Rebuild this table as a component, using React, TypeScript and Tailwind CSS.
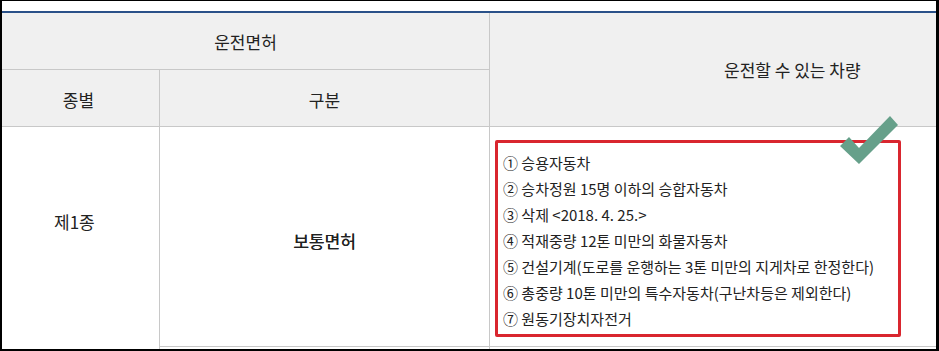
import React from "react";

const items = [
  "① 승용자동차",
  "② 승차정원 15명 이하의 승합자동차",
  "③ 삭제 <2018. 4. 25.>",
  "④ 적재중량 12톤 미만의 화물자동차",
  "⑤ 건설기계(도로를 운행하는 3톤 미만의 지게차로 한정한다)",
  "⑥ 총중량 10톤 미만의 특수자동차(구난차등은 제외한다)",
  "⑦ 원동기장치자전거",
];

export default function App() {
  return (
    <div
      className="relative w-[939px] h-[351px] overflow-hidden bg-white border-black border-t border-l-2 border-r-[3px] border-b-2 text-[#222]"
      style={{ fontFamily: '"Noto Sans CJK KR", "Noto Sans", sans-serif' }}
    >
      <div className="h-[10px] bg-white" />
      <div className="h-[2px] bg-[#2a5189]" />
      <div className="grid grid-cols-[158px_330px_1fr] grid-rows-[57px_57px_220px_2px] bg-white">
        <div className="col-start-1 col-end-3 row-start-1 bg-[#f0f0f0] border-b border-r border-[#c8c8c8] flex items-center justify-center pt-[1px] text-[17px] leading-[24px]">
          운전면허
        </div>
        <div className="col-start-3 row-start-1 row-end-3 bg-[#f0f0f0] border-b border-[#c8c8c8] flex items-center pl-[234px] pt-[1px] text-[17px] leading-[24px]">
          운전할 수 있는 차량
        </div>
        <div className="col-start-1 row-start-2 bg-[#f0f0f0] border-b border-r border-[#c8c8c8] flex items-center justify-center pt-[4px] pr-[4px] text-[17px] leading-[24px]">
          종별
        </div>
        <div className="col-start-2 row-start-2 bg-[#f0f0f0] border-b border-r border-[#c8c8c8] flex items-center justify-center pt-[4px] text-[17px] leading-[24px]">
          구분
        </div>
        <div className="col-start-1 row-start-3 row-end-5 border-r border-[#c8c8c8] pl-[52px] pt-[83px] text-[17px] leading-[24px]">
          제1종
        </div>
        <div className="col-start-2 row-start-3 border-b border-r border-[#c8c8c8] flex justify-center pt-[102px] text-[17px] leading-[24px] [text-shadow:0.25px_0_0_#222]">
          보통면허
        </div>
        <div className="col-start-3 row-start-3 border-b border-[#c8c8c8] pl-[5px] pt-[13px]">
          <div className="w-[406px] h-[197px] border-[3px] border-[#d9262f] rounded-[2px] pl-[5px] pt-[7px] text-[15px] leading-[26px]">
            {items.map((t) => (
              <div key={t} className="whitespace-nowrap">
                {t}
              </div>
            ))}
          </div>
        </div>
        <div className="col-start-2 row-start-4 border-r border-[#c8c8c8]" />
        <div className="col-start-3 row-start-4" />
      </div>
      <svg
        className="absolute left-[836px] top-[113px]"
        width="62"
        height="52"
        viewBox="0 0 62 52"
      >
        <polygon points="2,32 11,23 21,34 52,2 60,11 21,50" fill="#66a08a" />
      </svg>
    </div>
  );
}
